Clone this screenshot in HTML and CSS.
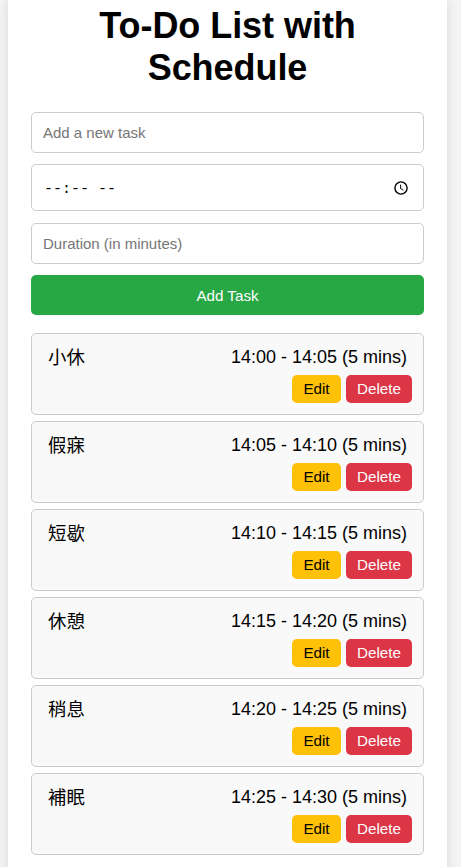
FILE: index.html
```html
<!DOCTYPE html>
<html lang="zh-Hant">
<head>
<meta charset="utf-8">
<title>To-Do List with Schedule</title>
<link rel="stylesheet" href="styles.css">
</head>
<body>
<main class="container">
<h1>To-Do List with Schedule</h1>
<form class="form">
<input class="field" type="text" placeholder="Add a new task">
<div class="field time"><span>--:-- --</span><svg class="clock" viewBox="0 0 16 16"><circle cx="8" cy="8" r="6.1"/><path class="hands" d="M7.6 4.6v3.9l2.8 1.7"/></svg></div>
<input class="field" type="text" placeholder="Duration (in minutes)">
<button class="add" type="button">Add Task</button>
</form>
<ul class="tasks">
<li class="task"><div class="row"><span class="name">小休</span><span>14:00 - 14:05 (5 mins)</span></div><div class="actions"><button class="edit">Edit</button><button class="delete">Delete</button></div></li>
<li class="task"><div class="row"><span class="name">假寐</span><span>14:05 - 14:10 (5 mins)</span></div><div class="actions"><button class="edit">Edit</button><button class="delete">Delete</button></div></li>
<li class="task"><div class="row"><span class="name">短歇</span><span>14:10 - 14:15 (5 mins)</span></div><div class="actions"><button class="edit">Edit</button><button class="delete">Delete</button></div></li>
<li class="task"><div class="row"><span class="name">休憩</span><span>14:15 - 14:20 (5 mins)</span></div><div class="actions"><button class="edit">Edit</button><button class="delete">Delete</button></div></li>
<li class="task"><div class="row"><span class="name">稍息</span><span>14:20 - 14:25 (5 mins)</span></div><div class="actions"><button class="edit">Edit</button><button class="delete">Delete</button></div></li>
<li class="task"><div class="row"><span class="name">補眠</span><span>14:25 - 14:30 (5 mins)</span></div><div class="actions"><button class="edit">Edit</button><button class="delete">Delete</button></div></li>
</ul>
</main>
</body>
</html>
```
FILE: styles.css
```css
* { box-sizing: border-box; }
html { overflow: hidden; }
body {
  margin: 0;
  height: 867px;
  overflow: hidden;
  background: #f4f4f4;
  color: #000;
  font-family: "Liberation Sans", "Noto Sans CJK TC", sans-serif;
}
.container {
  margin: 0 14px 0 8px;
  padding: 5px 23px 40px;
  background: #fff;
  box-shadow: 0 0 11px rgba(0, 0, 0, 0.12);
}
h1 {
  margin: 0 0 23px;
  text-align: center;
  font-size: 36px;
  line-height: 42px;
  letter-spacing: -0.05px;
}
.form {
  display: flex;
  flex-direction: column;
}
.field {
  height: 41px;
  margin: 0 0 11px;
  padding: 0 11px;
  border: 1px solid #ccc;
  border-radius: 5px;
  background: #fff;
  font-family: inherit;
  font-size: 15px;
}
.field::placeholder { color: #757575; }
.time {
  display: flex;
  align-items: center;
  justify-content: space-between;
  height: 47px;
  margin-bottom: 12px;
  padding: 0 14px 0 12px;
  font-family: "Liberation Mono", monospace;
}
.time span { padding-top: 4px; }
.clock {
  width: 16px;
  height: 16px;
  fill: none;
  stroke: #000;
  stroke-width: 1.4;
}
.hands { stroke-width: 1; }
button {
  border: 0;
  border-radius: 5px;
  color: #fff;
  font-family: inherit;
  font-size: 15.2px;
}
.add {
  height: 40px;
  background: #28a745;
}
.tasks {
  margin: 18px 0 0;
  padding: 0;
  list-style: none;
}
.task {
  height: 82px;
  margin-bottom: 6px;
  padding: 11px;
  border: 1px solid #ccc;
  border-radius: 5px;
  background: #f9f9f9;
}
.row {
  display: flex;
  justify-content: space-between;
  height: 30px;
  padding: 0 5px;
  font-size: 18px;
  line-height: 24px;
}
.name {
  padding-top: 1px;
  font-size: 18.4px;
  font-weight: 400;
}
.actions {
  display: flex;
  justify-content: flex-end;
  gap: 5px;
}
.actions button {
  height: 28px;
  padding: 0 0 2px;
}
.actions .edit {
  width: 49px;
  background: #ffc107;
  color: #000;
}
.actions .delete {
  width: 66px;
  background: #dc3545;
}
```
